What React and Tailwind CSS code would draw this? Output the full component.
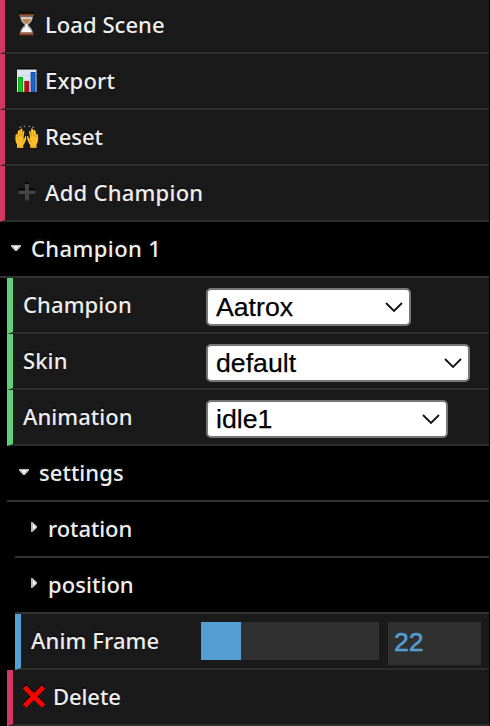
import React from 'react';

const LABEL =
  "font-['Noto_Sans',sans-serif] font-medium text-[22px] leading-[50px] text-[#eeeeee] whitespace-pre [text-shadow:0_-2px_0_#111]";

function Hourglass() {
  return (
    <svg className="h-6 w-6" viewBox="0 0 24 24">
      <path d="M6 4h13q0 5-5 9q5 4 5 9H6q0-5 5-9Q6 9 6 4z" fill="#a9a9b4" />
      <path d="M7 5.500h11q-.5 3.500-5.500 6.500Q7.500 9 7 5.500z" fill="#dfd5c4" />
      <path d="M8 7h9q-1 3-4.500 5Q9 10 8 7z" fill="#b8834f" />
      <path d="M11.800 12h1.400l.7 4 3.600 4.500h-10l3.600-4.500z" fill="#fff8ea" />
      <path d="M7 20.500q1-4 4-5.500l-1 5.500zM18 20.500q-1-4-4-5.500l1 5.500z" fill="#f1f1f8" />
      <rect x="5" y="1" width="15" height="3.500" rx="1" fill="#4e2a1b" />
      <rect x="5" y="-.5" width="15" height="2" rx=".7" fill="#090706" />
      <rect x="5.500" y="2.700" width="14" height="1.300" fill="#995a39" />
      <rect x="5" y="20.500" width="15" height="3.300" rx="1" fill="#5b2c19" />
      <rect x="6" y="21" width="13" height="1.300" fill="#b1653e" />
    </svg>
  );
}

function BarChart() {
  return (
    <svg className="h-6 w-6" viewBox="0 0 24 24">
      <rect x="3" y="0" width="19" height="2" fill="#080808" />
      <rect x="3" y="1.500" width="19.500" height="22.500" fill="#dce6f0" />
      <path d="M4 7.500h18M4 12.500h18M4 17.500h18" stroke="#c5d2df" strokeWidth=".7" />
      <rect x="4" y="9" width="5" height="15" fill="#08a51a" />
      <rect x="5" y="10" width="3" height="14" fill="#10c820" />
      <rect x="10.300" y="13" width="5" height="11" fill="#b50b13" />
      <rect x="16.600" y="4" width="5" height="20" fill="#0b51b5" />
      <rect x="17.600" y="5" width="3" height="19" fill="#1766ce" />
    </svg>
  );
}

function Hand() {
  return (
    <g>
      <path
        d="M2.500 24v-3.500Q.8 17.500.8 14.500l.3-3.700q.8-1.500 1.700 0l.7-4q1-1.400 1.800 0l1-2q1.400-1 1.700.4L7.800 9l.9-2q1.200-.6 1.200.7L9 13.500l.3 2 1.500-3.200q1.100-.8 1.100.7 0 3.500-2 6.500-.6 1-1.200 1.500v3z"
        fill="#fbbf2e"
      />
      <path d="M3 13.500l.3-3M5.200 12.500l.5-4M7.300 12.500l.7-3.500M3 23h5M7.800 18.500l1.200-2.500" fill="none" stroke="#d98a14" strokeWidth=".8" />
    </g>
  );
}

function RaisedHands() {
  return (
    <svg className="h-6 w-6 overflow-visible" viewBox="0 0 24 24">
      <g transform="translate(.5 0)">
        <Hand />
        <g transform="translate(24.500 0) scale(-1 1)">
          <Hand />
        </g>
        <path d="M5.500 3.500l.8-.5M9.700 2l.2.600M14.800 2l-.2.600M19 3.500l-.8-.5" stroke="#8e9297" strokeWidth="1.200" strokeLinecap="round" />
      </g>
    </svg>
  );
}

function Plus() {
  return (
    <svg className="h-6 w-6" viewBox="0 0 24 24">
      <path d="M11 2h4v6.500h6.500v4H15V19h-4v-6.500H4.500v-4H11z" fill="#050505" />
      <path d="M11 4h4v6.500h6.500v3.500H15v6.500h-4V14H4.500v-3.500H11z" fill="#444" />
    </svg>
  );
}

function Cross() {
  return (
    <svg className="h-6 w-6" viewBox="0 0 24 24">
      <path d="M2.500 1.500l19 19M21.500 1.500l-19 19" stroke="#070707" strokeWidth="4.600" />
      <path d="M2.500 3l19 19M21.500 3l-19 19" stroke="#f80400" strokeWidth="4.600" />
    </svg>
  );
}

function ActionRow({ icon, label, nested, spacing }) {
  return (
    <button
      className={`flex h-14 shrink-0 items-center border-b-2 border-l-6 border-b-[#2c2c2c] border-l-[#d33761] bg-[#1a1a1a] pb-0.5 text-left ${
        nested ? 'ml-[7px] pl-[9px]' : '-ml-px pl-[9px]'
      }`}
    >
      {icon}
      <span className={`${LABEL} ml-[7px] ${spacing}`}>{label}</span>
    </button>
  );
}

function FolderRow({ label, open, className, spacing }) {
  return (
    <div className={`flex h-14 shrink-0 items-center border-b-2 border-[#323232] pb-0.5 ${className}`}>
      {open ? (
        <svg className="h-3 w-3" viewBox="0 0 12 12">
          <path d="M1 3h10v1.500L7 9H5L1 4.500z" fill="#b8b8b8" />
          <path d="M3 4.300h6L6 7.500z" fill="#fff" />
        </svg>
      ) : (
        <svg className="h-3 w-3" viewBox="0 0 12 12">
          <path d="M4 0h1.500L10 4.200v1.600L5.500 10H4z" fill="#b8b8b8" />
          <path d="M6 2.300v5.400L9 5z" fill="#fff" />
        </svg>
      )}
      <span className={`${LABEL} ml-[9px] ${spacing}`}>{label}</span>
    </div>
  );
}

function SelectRow({ label, value, width, spacing }) {
  return (
    <div className="ml-[7px] flex h-14 shrink-0 items-center border-b-2 border-l-6 border-b-[#2c2c2c] border-l-[#60cf79] bg-[#1a1a1a] pb-0.5 pl-2.5">
      <span className={`${LABEL} w-[183px] ${spacing}`}>{label}</span>
      <div
        className={`mt-1.5 flex h-[38px] items-center justify-between rounded-[5px] border-2 border-[#767676] bg-white pr-[5px] pl-2 font-['Liberation_Sans',Arial,sans-serif] text-[26.67px] leading-[34px] text-black [-webkit-text-stroke:0.25px_#000] ${width}`}
      >
        <span>{value}</span>
        <svg className="h-5 w-5" viewBox="0 0 20 20" fill="none">
          <path d="M2 6l8 8 8-8" stroke="#111" strokeWidth="1.800" />
        </svg>
      </div>
    </div>
  );
}

export default function App() {
  return (
    <div className="h-[726px] w-[490px] overflow-hidden bg-black">
      <div className="-mt-0.5 flex w-[489px] flex-col">
        <ActionRow icon={<Hourglass />} label="Load Scene" spacing="tracking-[0.05px]" />
        <ActionRow icon={<BarChart />} label="Export" spacing="tracking-[0.2px]" />
        <ActionRow icon={<RaisedHands />} label="Reset" spacing="tracking-[-0.1px]" />
        <ActionRow icon={<Plus />} label="Add Champion" spacing="tracking-[0.25px]" />

        <FolderRow label="Champion 1" open className="pl-2.5" spacing="tracking-[0.4px]" />
        <SelectRow label="Champion" value="Aatrox" width="w-[205px]" spacing="tracking-[0.1px]" />
        <SelectRow label="Skin" value="default" width="w-[264px]" spacing="tracking-[0.1px]" />
        <SelectRow label="Animation" value="idle1" width="w-[242px]" spacing="tracking-[0.05px]" />

        <FolderRow label="settings" open className="ml-[7px] pl-[11px]" spacing="tracking-[0.05px]" />
        <FolderRow label="rotation" className="ml-[15px] pl-3" spacing="tracking-[-0.1px]" />
        <FolderRow label="position" className="ml-[15px] pl-3" spacing="tracking-[0.05px]" />

        <div className="ml-[15px] flex h-14 shrink-0 items-start border-b-2 border-l-6 border-b-[#2c2c2c] border-l-[#539fd3] bg-[#1a1a1a] pl-2.5">
          <span className={`${LABEL} mt-px w-[170px] tracking-[0.1px]`}>Anim Frame</span>
          <div className="mt-2 h-[38px] w-[178px] bg-[#303030]">
            <div className="h-full w-10 bg-[#539fd3]" />
          </div>
          <div className="mt-2 ml-[9px] h-[43px] w-[93px] bg-[#303030] pl-1.5 font-['Liberation_Sans',Arial,sans-serif] text-[26.67px] leading-[41px] text-[#539fd3] [-webkit-text-stroke:0.5px_#539fd3]">
            22
          </div>
        </div>

        <ActionRow icon={<Cross />} label="Delete" nested spacing="tracking-[-0.1px]" />
      </div>
    </div>
  );
}
